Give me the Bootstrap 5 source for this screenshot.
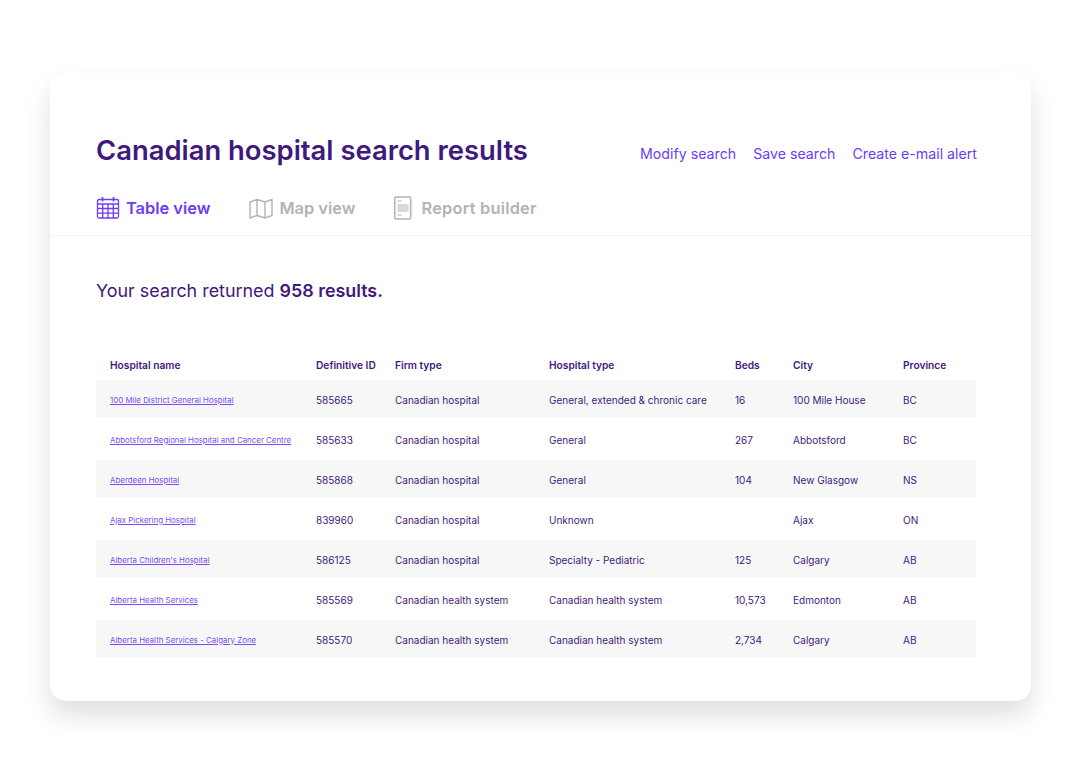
<!DOCTYPE html>
<html lang="en">
<head>
    <meta charset="UTF-8">
    <meta name="viewport" content="width=device-width, initial-scale=1.0">
    <title>Canadian hospital search results</title>
    <link href="https://cdn.jsdelivr.net/npm/bootstrap@5.3.0/dist/css/bootstrap.min.css" rel="stylesheet">
    <style>
        body { background: #fff; font-family: Inter, "Liberation Sans", sans-serif; color: #3f1a7d; }
        .page-wrap { padding: 73px 0 0 50px; min-height: 774px; }
        .sheet { width: 981px; height: 628px; border-radius: 16px; background: #fff; box-shadow: 0 14px 26px rgba(0, 0, 0, .13); }
        .sheet-head { padding: 58px 54px 0 46px; height: 163px; border-bottom: 1px solid #f4f4f5; }
        .page-title { font-size: 27.4px; line-height: 38px; font-weight: 600; color: #3f1a7d; margin: 0; }
        .head-links { gap: 17px; padding-top: 11px; }
        .head-links a { font-size: 14.2px; line-height: 24px; color: #6c3cf6; text-decoration: none; }
        .view-tabs { margin-top: 27px; gap: 38px; }
        .view-tab { font-size: 16.4px; line-height: 24px; font-weight: 600; color: #b3b3b3; text-decoration: none; }
        .view-tab svg { margin-right: 6px; }
        .view-tab.on { color: #6c3cf6; margin-right: 1px; }
        .view-tab.report { letter-spacing: .2px; }
        .view-tab.report svg { margin-right: 8px; }
        .sheet-body { padding: 42px 55px 0 46px; }
        .result-line { font-size: 17.9px; line-height: 26px; margin: 0 0 45px; color: #3f1a7d; }
        .result-line b { font-weight: 600; }
        .hosp-table { width: 880px; table-layout: fixed; border-collapse: separate; border-spacing: 0 2px; margin: 0; font-size: 10px; color: #3f1a7d; }
        .hosp-table th, .hosp-table td { padding: 2px 0 0 14px; height: 38px; vertical-align: middle; border: 0; background: transparent; color: #3f1a7d; box-shadow: none; white-space: nowrap; }
        .hosp-table th { font-weight: 600; height: 27px; font-size: 10.2px; }
        .hosp-table tbody tr:nth-child(odd) td { background: #f7f7f8; }
        .hosp-table a { font-size: 7.9px; color: #7a4cf8; text-decoration: underline; vertical-align: 1px; }
    </style>
</head>
<body>
    <div class="page-wrap">
    <div class="sheet">
        <div class="sheet-head">
            <div class="d-flex justify-content-between align-items-start">
                <h1 class="page-title">Canadian hospital search results</h1>
                <div class="d-flex head-links">
                    <a href="#">Modify search</a>
                    <a href="#">Save search</a>
                    <a href="#">Create e-mail alert</a>
                </div>
            </div>
            <div class="d-flex view-tabs">
                <a href="#" class="d-flex align-items-center view-tab on">
                    <svg width="24" height="24" viewBox="0 0 24 24" fill="none" stroke="#6c3cf6" stroke-width="1.3">
                        <rect x="1.5" y="3.5" width="21" height="18.5" rx="1.5"/>
                        <path d="M1.5 8h21M1.5 12.5h21M1.5 17.2h21M6.7 8v14M12 8v14M17.3 8v14"/>
                        <path d="M6.5 1v4.5M17.5 1v4.5" stroke-width="1.6"/>
                    </svg>
                    Table view
                </a>
                <a href="#" class="d-flex align-items-center view-tab">
                    <svg width="24" height="24" viewBox="0 0 24 24" fill="none" stroke="#b3b3b3" stroke-width="1.4">
                        <path d="M1 6l7-2.5 8 2.5 7-2.5v16l-7 2.5-8-2.5-7 2.5zM8 3.5v16M16 6v16"/>
                    </svg>
                    Map view
                </a>
                <a href="#" class="d-flex align-items-center view-tab report">
                    <svg width="20" height="24" viewBox="0 0 20 24" fill="none" stroke="#b3b3b3">
                        <rect x="1.7" y="1" width="16" height="22" rx="1.2" stroke-width="1.6"/>
                        <path d="M4.5 5h4M4.5 9h11M4.5 11h11M4.5 13h11M4.5 15h11M4.5 19h4" stroke-width="1.2"/>
                    </svg>
                    Report builder
                </a>
            </div>
        </div>
        <div class="sheet-body">
            <p class="result-line">Your search returned <b>958 results.</b></p>
            <table class="table hosp-table">
                <colgroup>
                    <col style="width: 206px"><col style="width: 79px"><col style="width: 154px"><col style="width: 186px"><col style="width: 58px"><col style="width: 110px"><col style="width: 87px">
                </colgroup>
                <thead>
                    <tr><th>Hospital name</th><th>Definitive ID</th><th>Firm type</th><th>Hospital type</th><th>Beds</th><th>City</th><th>Province</th></tr>
                </thead>
                <tbody>
                    <tr><td><a href="#">100 Mile District General Hospital</a></td><td>585665</td><td>Canadian hospital</td><td>General, extended &amp; chronic care</td><td>16</td><td>100 Mile House</td><td>BC</td></tr>
                    <tr><td><a href="#">Abbotsford Regional Hospital and Cancer Centre</a></td><td>585633</td><td>Canadian hospital</td><td>General</td><td>267</td><td>Abbotsford</td><td>BC</td></tr>
                    <tr><td><a href="#">Aberdeen Hospital</a></td><td>585868</td><td>Canadian hospital</td><td>General</td><td>104</td><td>New Glasgow</td><td>NS</td></tr>
                    <tr><td><a href="#">Ajax Pickering Hospital</a></td><td>839960</td><td>Canadian hospital</td><td>Unknown</td><td></td><td>Ajax</td><td>ON</td></tr>
                    <tr><td><a href="#">Alberta Children's Hospital</a></td><td>586125</td><td>Canadian hospital</td><td>Specialty - Pediatric</td><td>125</td><td>Calgary</td><td>AB</td></tr>
                    <tr><td><a href="#">Alberta Health Services</a></td><td>585569</td><td>Canadian health system</td><td>Canadian health system</td><td>10,573</td><td>Edmonton</td><td>AB</td></tr>
                    <tr><td><a href="#">Alberta Health Services - Calgary Zone</a></td><td>585570</td><td>Canadian health system</td><td>Canadian health system</td><td>2,734</td><td>Calgary</td><td>AB</td></tr>
                </tbody>
            </table>
        </div>
    </div>
    </div>
    <script src="https://cdn.jsdelivr.net/npm/bootstrap@5.3.0/dist/js/bootstrap.bundle.min.js"></script>
</body>
</html>
